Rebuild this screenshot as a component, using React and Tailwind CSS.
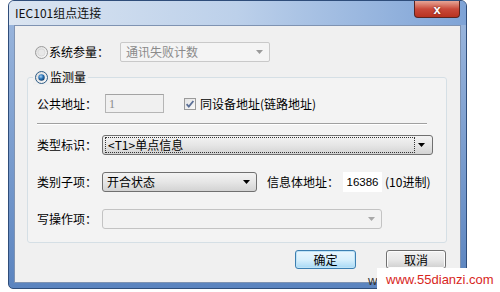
import React from "react";

const cjk = "font-['Noto_Sans_CJK_SC',sans-serif]";

function Radio({ checked }) {
  return (
    <svg width="13" height="13" viewBox="0 0 13 13" className="shrink-0">
      <defs>
        <linearGradient id={checked ? "rg1" : "rg0"} x1="0" y1="0" x2="1" y2="1">
          <stop offset="0" stopColor="#dcdcdc" />
          <stop offset="1" stopColor="#fbfbfb" />
        </linearGradient>
        <radialGradient id="dot" cx="0.4" cy="0.35" r="0.7">
          <stop offset="0" stopColor="#a9d3f5" />
          <stop offset="0.5" stopColor="#2b74b8" />
          <stop offset="1" stopColor="#0d3b69" />
        </radialGradient>
      </defs>
      <circle cx="6.5" cy="6.5" r="6" fill={`url(#${checked ? "rg1" : "rg0"})`} stroke={checked ? "#2e5c86" : "#9a9a9a"} strokeWidth="1" />
      {checked ? <circle cx="6.5" cy="6.5" r="3.2" fill="url(#dot)" /> : <circle cx="6.5" cy="6.5" r="3.6" fill="#e8e8e8" stroke="#d0d0d0" strokeWidth="0.6" />}
    </svg>
  );
}

function Arrow({ color = "#000" }) {
  return (
    <svg width="7" height="4" viewBox="0 0 7 4" className="shrink-0">
      <polygon points="0,0 7,0 3.5,4" fill={color} />
    </svg>
  );
}

export default function App() {
  return (
    <div className={`relative w-[500px] h-[292px] bg-white overflow-hidden ${cjk} text-[12px] leading-[16px] text-black`}>
      {/* window */}
      <div className="ml-[8px] w-[459px] h-[289px] rounded-t-[6px] rounded-b-[5px] border border-[#2f4d7a] bg-linear-to-b from-[#9db8de] to-[#5b84bf] flex flex-col">
        {/* title bar */}
        <div className="h-[24px] flex items-start justify-between rounded-t-[5px] bg-linear-to-r from-[#dbe5f1] via-[#bcd0ea] to-[#7ea3d6] pl-[6px]">
          <div className="h-[24px] flex items-center text-[12px] text-[#111]">IEC101组点连接</div>
          <div className="mr-[6px] w-[46px] h-[17px] rounded-b-[4px] border border-t-0 border-[#5a2420] bg-linear-to-b from-[#e6a597] via-[#c9493a] to-[#b8321f] flex items-center justify-center">
            <span className="text-white font-bold text-[13px] leading-[13px] font-['Liberation_Sans',sans-serif] [text-shadow:0_0_2px_#5a1a12]">x</span>
          </div>
        </div>
        {/* content */}
        <div className="ml-[5px] mr-[5px] h-[258px] bg-[#f0f0f0] border border-[#7f93b2] flex flex-col pt-[16px]">
          {/* row 1 */}
          <div className="h-[20px] flex items-center pl-[20px]">
            <Radio checked={false} />
            <div className="ml-[1px] w-[71px]">系统参量：</div>
            <div className="w-[150px] h-[20px] border border-[#c9c9c9] rounded-[2px] bg-[#f4f4f4] flex items-center justify-between pl-[5px] pr-[6px] text-[#8a8a8a]">
              <span>通讯失败计数</span>
              <Arrow color="#9a9a9a" />
            </div>
          </div>
          {/* group */}
          <fieldset className="mt-[7px] ml-[12px] w-[420px] border border-[#d5dfe5] rounded-[3px] bg-[#f3f3f3]">
            <legend className="ml-[5px] px-[2px] h-[16px] flex items-center bg-[#f0f0f0]">
              <Radio checked={true} />
              <span className="ml-[2px]">监测量</span>
            </legend>
            <div className="pl-[9px] pt-[9px] pb-[13px] flex flex-col">
              {/* 公共地址 */}
              <div className="h-[19px] flex items-center">
                <div className="w-[68px]">公共地址：</div>
                <div className="w-[59px] h-[19px] border border-[#b5b5b5] border-t-[#a3a3a3] bg-[#f0f0f0] flex items-center pl-[3px] text-[#8a8a8a] font-['Liberation_Serif',serif]">1</div>
                <svg width="12" height="12" viewBox="0 0 12 12" className="ml-[20px] shrink-0">
                  <defs>
                    <linearGradient id="cb" x1="0" y1="0" x2="1" y2="1">
                      <stop offset="0" stopColor="#e2e2e2" />
                      <stop offset="1" stopColor="#fafafa" />
                    </linearGradient>
                  </defs>
                  <rect x="0.5" y="0.5" width="11" height="11" fill="url(#cb)" stroke="#9a9a9a" />
                  <path d="M2.6 6.2 L4.8 8.6 L9.4 3" fill="none" stroke="#5b6f96" strokeWidth="1.8" />
                </svg>
                <div className="ml-[4px]">同设备地址(链路地址)</div>
              </div>
              {/* separator */}
              <div className="mt-[10px] w-[390px] border-t border-[#a0a0a0] border-b border-b-white" />
              {/* 类型标识 */}
              <div className="mt-[10px] h-[20px] flex items-center">
                <div className="w-[65px]">类型标识：</div>
                <div className="w-[331px] h-[20px] border border-[#707070] rounded-[3px] bg-linear-to-b from-[#f3f3f3] via-[#e6e6e6] to-[#d3d3d3] flex items-center pl-[2px] pr-[7px]">
                  <div className="w-[310px] h-[16px] border border-dotted border-[#333] flex items-center pl-[2px]">{"<T1>单点信息"}</div>
                  <div className="flex-1 flex justify-end"><Arrow /></div>
                </div>
              </div>
              {/* 类别子项 */}
              <div className="mt-[17px] h-[20px] flex items-center">
                <div className="w-[65px]">类别子项：</div>
                <div className="w-[155px] h-[20px] border border-[#707070] rounded-[3px] bg-linear-to-b from-[#f3f3f3] via-[#e6e6e6] to-[#d3d3d3] flex items-center justify-between pl-[4px] pr-[6px]">
                  <span>开合状态</span>
                  <Arrow />
                </div>
                <div className="ml-[10px] w-[76px]">信息体地址：</div>
                <div className="w-[39px] h-[20px] bg-white flex items-center justify-center font-['Liberation_Sans',sans-serif] text-[11.5px]">16386</div>
                <div className="ml-[3px]">(10进制)</div>
              </div>
              {/* 写操作项 */}
              <div className="mt-[17px] h-[20px] flex items-center">
                <div className="w-[65px]">写操作项：</div>
                <div className="w-[280px] h-[20px] border border-[#c3c3c3] rounded-[3px] bg-[#f2f2f2] flex items-center justify-end pr-[6px]">
                  <Arrow color="#a8a8a8" />
                </div>
              </div>
            </div>
          </fieldset>
          {/* buttons */}
          <div className="mt-[7px] flex justify-end gap-[30px] pr-[14px]">
            <div className="w-[61px] h-[19px] rounded-[3px] border border-[#3c7fb1] bg-linear-to-b from-[#eaf6fd] via-[#d9f0fc] to-[#a7d9f5] flex items-center justify-center shadow-[inset_0_0_0_1px_#bfe3f6]">确定</div>
            <div className="w-[60px] h-[19px] rounded-[3px] border border-[#707070] bg-linear-to-b from-[#f2f2f2] via-[#e8e8e8] to-[#cfcfcf] flex items-center justify-center shadow-[inset_0_0_0_1px_#fcfcfc]">取消</div>
          </div>
        </div>
      </div>
      {/* watermark */}
      <div className="absolute left-[368px] top-[273px] text-[13px] text-[#333] font-['Liberation_Sans',sans-serif]">w</div>
      <div className="absolute left-[377px] top-[268px] w-[123px] h-[24px] bg-white flex items-center pl-[9px] text-[13px] text-[#d8261c] font-['Liberation_Sans',sans-serif]">
        www.55dianzi.com
      </div>
    </div>
  );
}
